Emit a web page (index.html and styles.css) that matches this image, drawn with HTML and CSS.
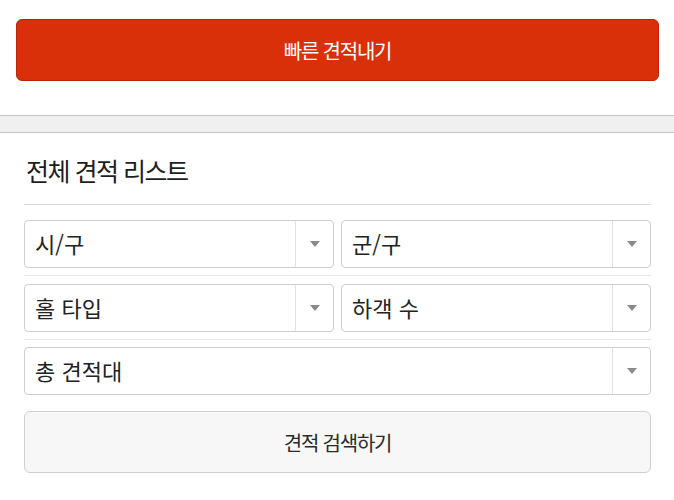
FILE: index.html
```html
<!DOCTYPE html>
<html lang="ko">
<head>
<meta charset="utf-8">
<link rel="stylesheet" href="styles.css">
</head>
<body>
<div class="top">
  <button class="quick">빠른 견적내기</button>
</div>
<div class="band"></div>
<section class="list">
  <h2 class="title">전체 견적 리스트</h2>
  <div class="row">
    <div class="select"><span class="label">시/구</span><span class="arrow"></span></div>
    <div class="select"><span class="label">군/구</span><span class="arrow"></span></div>
  </div>
  <div class="row">
    <div class="select"><span class="label">홀 타입</span><span class="arrow"></span></div>
    <div class="select"><span class="label">하객 수</span><span class="arrow"></span></div>
  </div>
  <div class="row last">
    <div class="select"><span class="label">총 견적대</span><span class="arrow"></span></div>
  </div>
  <button class="search">견적 검색하기</button>
</section>
</body>
</html>
```
FILE: styles.css
```css
* { box-sizing: border-box; }
body {
  margin: 0;
  background: #fff;
  font-family: "Noto Sans CJK KR", "Noto Sans", sans-serif;
  color: #222;
}
.top {
  padding: 19px 15px 34px 16px;
}
.quick {
  display: block;
  width: 100%;
  height: 62px;
  border: 1px solid #b5260b;
  border-radius: 6px;
  background: #d9300a;
  color: #fff;
  font-family: inherit;
  font-size: 20px;
  letter-spacing: -1.2px;
  padding: 0;
}
.band {
  height: 18px;
  background: #f0f0f0;
  border-top: 1px solid #c4c4c4;
  border-bottom: 1px solid #c4c4c4;
}
.list {
  padding: 0 23px 0 24px;
}
.title {
  margin: 0;
  height: 72px;
  padding-top: 20px;
  font-size: 25px;
  font-weight: 400;
  letter-spacing: -1.5px;
  line-height: 34px;
  padding-left: 2px;
  color: #1e1e1e;
  border-bottom: 1px solid #dcdcdc;
}
.row {
  display: flex;
  gap: 7px;
  margin-top: 15px;
  padding-bottom: 7px;
  border-bottom: 1px solid #e6e6e6;
}
.row + .row { margin-top: 8px; }
.row.last {
  margin-top: 7px;
  border-bottom: none;
  padding-bottom: 0;
}
.select {
  flex: 1;
  height: 48px;
  border: 1px solid #cfcfcf;
  border-radius: 4px;
  display: flex;
  align-items: center;
  background: #fff;
}
.label {
  flex: 1;
  padding-left: 10px;
  padding-bottom: 2px;
  font-size: 22px;
  letter-spacing: 0;
  color: #222;
}
.arrow {
  width: 38px;
  height: 100%;
  border-left: 1px solid #e2e2e2;
  display: flex;
  align-items: center;
  justify-content: center;
}
.arrow::after {
  content: "";
  width: 0;
  height: 0;
  border-left: 5px solid transparent;
  border-right: 5px solid transparent;
  border-top: 6px solid #8a8a8a;
}
.search {
  display: block;
  width: 100%;
  height: 62px;
  margin-top: 16px;
  border: 1px solid #cfcfcf;
  border-radius: 6px;
  background: #f7f7f7;
  color: #2a2a2a;
  font-family: inherit;
  font-size: 20px;
  letter-spacing: -1.2px;
  padding: 0;
}
```
